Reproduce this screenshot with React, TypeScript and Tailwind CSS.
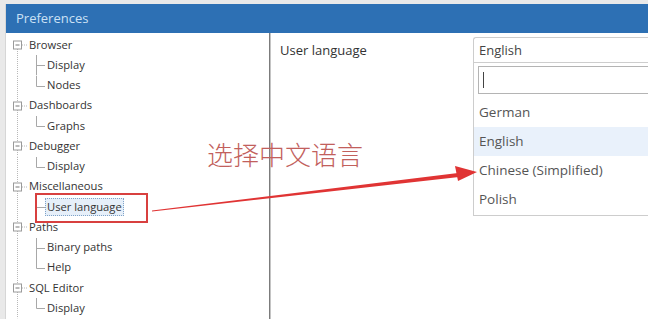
import React from "react";

type Node = { label: string; children: string[] };

const tree: Node[] = [
  { label: "Browser", children: ["Display", "Nodes"] },
  { label: "Dashboards", children: ["Graphs"] },
  { label: "Debugger", children: ["Display"] },
  { label: "Miscellaneous", children: ["User language"] },
  { label: "Paths", children: ["Binary paths", "Help"] },
  { label: "SQL Editor", children: ["Display"] },
];

const options = ["German", "English", "Chinese (Simplified)", "Polish"];

function RootGutter({ first }: { first: boolean }) {
  return (
    <svg width="23" height="20.25" viewBox="0 0 23 20.25" className="shrink-0">
      <line x1="11.5" y1={first ? 10 : 0} x2="11.5" y2="20.25" stroke="#b8b8b8" strokeDasharray="1 1" />
      <rect x="7.5" y="6" width="8" height="8" fill="#fff" stroke="#9a9a9a" />
      <line x1="9.5" y1="10" x2="13.5" y2="10" stroke="#777" />
      <line x1="16" y1="10" x2="21" y2="10" stroke="#b8b8b8" strokeDasharray="1 1" />
    </svg>
  );
}

function ChildGutter({ last }: { last: boolean }) {
  return (
    <svg width="41" height="20.25" viewBox="0 0 41 20.25" className="shrink-0">
      <line x1="11.5" y1="0" x2="11.5" y2="20.25" stroke="#b8b8b8" strokeDasharray="1 1" />
      <line x1="30.5" y1="0" x2="30.5" y2={last ? 10.5 : 20.25} stroke="#a8a8a8" />
      <line x1="30.5" y1="10.5" x2="39" y2="10.5" stroke="#a8a8a8" />
    </svg>
  );
}

function Tree() {
  return (
    <div className="pt-[2px] text-[11.2px] text-[#333]">
      {tree.map((node, i) => (
        <div key={node.label}>
          <div className="flex h-[20.25px] items-center">
            <RootGutter first={i === 0} />
            <span>{node.label}</span>
          </div>
          {node.children.map((child, j) => {
            const selected = child === "User language";
            return (
              <div key={child + j} className="flex h-[20.25px] items-center">
                <ChildGutter last={j === node.children.length - 1} />
                {selected ? (
                  <span className="-ml-[2px] border border-dotted border-[#7fa3c8] bg-[#e6eff9] px-[1px] leading-[16px]">
                    {child}
                  </span>
                ) : (
                  <span>{child}</span>
                )}
              </div>
            );
          })}
        </div>
      ))}
    </div>
  );
}

function LanguageSelect() {
  return (
    <div className="flex-1 pt-[4px] text-[13.5px] text-[#555]">
      <div className="flex h-[26px] items-center rounded-tl-[3px] border border-r-0 border-[#cdcdcd] pl-[5px] pt-[2px] text-[13px] text-[#444]">
        English
      </div>
      <div className="border-b border-l border-[#cdcdcd] pb-[1px]">
        <div className="pl-[4px] pt-[3px]">
          <div className="flex h-[28px] items-center border border-r-0 border-[#b4b4b4] pl-[4px]">
            <div className="h-[16px] w-px bg-[#444]" />
          </div>
        </div>
        <div className="mt-[4px]">
          {options.map((opt) => (
            <div
              key={opt}
              className={`flex h-[29px] items-center pl-[5px] ${opt === "English" ? "bg-[#e9f1fb]" : ""}`}
            >
              {opt}
            </div>
          ))}
        </div>
      </div>
    </div>
  );
}

export default function App() {
  return (
    <div
      className="relative flex h-[319px] w-[648px] flex-col overflow-hidden bg-[#e9e9e9]"
      style={{ fontFamily: '"Open Sans", "Noto Sans", sans-serif' }}
    >
      <div className="h-[4px] shrink-0" />
      <div className="flex min-h-0 flex-1">
        <div className="w-[6px] shrink-0 border-r border-[#d6d6d6]" />
        <div className="flex min-w-0 flex-1 flex-col">
          <div className="flex h-[29px] shrink-0 items-center bg-[#2d70b4] pl-[10px] text-[13px] text-[#cbe1f5]">
            Preferences
          </div>
          <div className="flex min-h-0 flex-1 bg-white">
            <div className="w-[263px] shrink-0 overflow-hidden">
              <Tree />
            </div>
            <div className="w-[2px] shrink-0 border-l border-[#7c7c7c] bg-[#c4c4c4]" />
            <div className="flex flex-1 items-start">
              <div className="mt-[4px] flex h-[26px] w-[202px] shrink-0 items-center pl-[9px] pt-[2px] text-[13px] text-[#333]">
                User language
              </div>
              <LanguageSelect />
            </div>
          </div>
        </div>
      </div>

      {/* annotation overlay */}
      <div className="pointer-events-none absolute left-[35px] top-[193px] h-[30px] w-[113px] border-2 border-[#d8403f]" />
      <div
        className="pointer-events-none absolute left-[207px] top-[141px] text-[26px] leading-none text-[#c2605c]"
        style={{ fontFamily: '"Noto Sans CJK SC", sans-serif', fontWeight: 300 }}
      >
        选择中文语言
      </div>
      <svg className="pointer-events-none absolute left-0 top-0" width="648" height="319" viewBox="0 0 648 319">
        <polygon points="152,210.5 458,173 459,177 152,211.5" fill="#e03434" />
        <polygon points="477,172 455,166 458,181" fill="#e03434" />
      </svg>
    </div>
  );
}
